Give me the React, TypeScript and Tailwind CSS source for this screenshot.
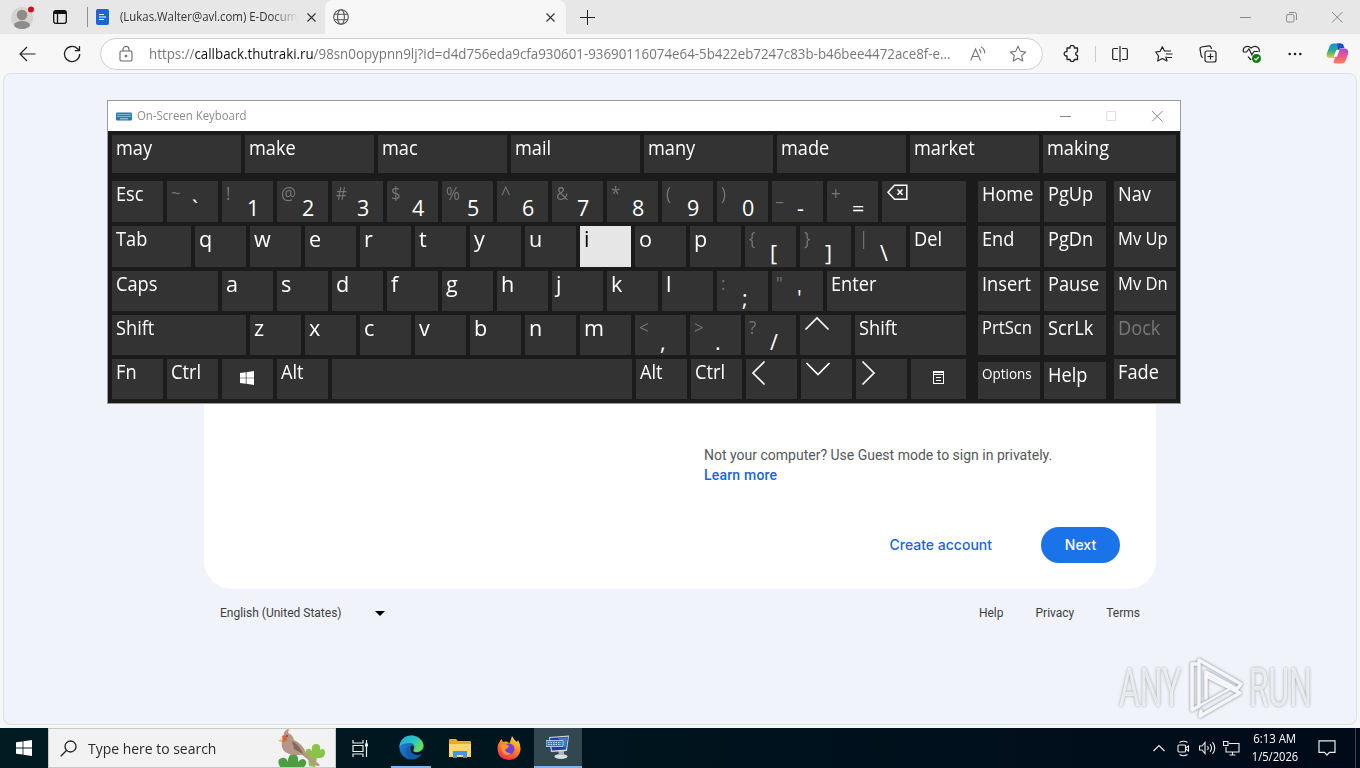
import React from "react";

type KeyDef = {
  label?: string;
  shift?: string;
  icon?: React.ReactNode;
  width?: string;
  size?: string;
  active?: boolean;
  dim?: boolean;
};

const WORD = "text-[20px] scale-x-[0.91] mt-[3px]";
const LETTER = "text-[22.5px] scale-x-[0.96] mt-[3px]";
const SMALL = "text-[18px] scale-x-[0.92] mt-[2px]";
const TINY = "text-[14.5px] scale-x-[0.93] mt-[2px]";

const letters = (chars: string): KeyDef[] =>
  chars.split("").map((c) => ({ label: c, size: LETTER }));

const pairs = (items: string[]): KeyDef[] =>
  items.map((p) => ({ shift: p[0], label: p[1] }));

const Chevron = ({ points, box }: { points: string; box: string }) => (
  <svg className={box} viewBox="0 0 26 26" fill="none" stroke="#fff" strokeWidth="1.7">
    <polyline points={points} />
  </svg>
);

const WindowsLogo = ({ className }: { className: string }) => (
  <svg className={className} viewBox="0 0 16 16" fill="#fff">
    <path d="M0 2.3 6.6 1.4v6.2H0zM7.4 1.3 16 0v7.6H7.4zM0 8.4h6.6v6.2L0 13.7zM7.4 8.4H16V16l-8.6-1.3z" />
  </svg>
);

const Backspace = (
  <svg className="ml-[5px] mt-[3px] h-[17px] w-[21px]" viewBox="0 0 21 17" fill="none" stroke="#fff" strokeWidth="1.5">
    <path d="M7.500 1.200h12.300v14H7.500L1 8.200z" />
    <path d="m10.500 5.500 5 5.200M15.500 5.500l-5 5.200" strokeWidth="1.600" />
  </svg>
);

const MenuIcon = (
  <svg className="ml-[22px] mt-[12px] h-[13px] w-[11px]" viewBox="0 0 11 13" fill="none" stroke="#fff" shapeRendering="crispEdges">
    <path d="M.5.5h10v12H.5zM0 1.500h11M0 3.500h11M3 6.500h5M3 9.500h5" />
  </svg>
);

const suggestions = ["may", "make", "mac", "mail", "many", "made", "market", "making"];

const rows: { height: string; keys: KeyDef[] }[] = [
  {
    height: "h-[41px]",
    keys: [
      { label: "Esc" },
      ...pairs(["~`", "!1", "@2", "#3", "$4", "%5", "^6", "&7", "*8", "(9", ")0", "_-", "+="]),
      { icon: Backspace, width: "w-[84px]" },
    ],
  },
  {
    height: "h-[41px]",
    keys: [
      { label: "Tab", width: "w-[79px]" },
      ...letters("qwertyu"),
      { label: "i", size: LETTER, active: true },
      ...letters("op"),
      ...pairs(["{[", "}]", "|\\"]),
      { label: "Del", width: "w-[56px]" },
    ],
  },
  {
    height: "h-[40px]",
    keys: [
      { label: "Caps", width: "w-[106px]" },
      ...letters("asdfghjkl"),
      ...pairs([":;", "\"'"]),
      { label: "Enter", width: "w-[139px]" },
    ],
  },
  {
    height: "h-[40px]",
    keys: [
      { label: "Shift", width: "w-[134px]" },
      ...letters("zxcvbnm"),
      ...pairs(["<,", ">.", "?/"]),
      { icon: <Chevron points="1.5,13.5 13,2 24.5,13.5" box="ml-[4px] mt-[1px] size-[26px]" /> },
      { label: "Shift", width: "w-[111px]" },
    ],
  },
  {
    height: "h-[40px]",
    keys: [
      { label: "Fn" },
      { label: "Ctrl" },
      { icon: <WindowsLogo className="ml-[18px] mt-[12px] size-[14px]" /> },
      { label: "Alt" },
      { width: "w-[300px]" },
      { label: "Alt" },
      { label: "Ctrl" },
      { icon: <Chevron points="13.5,1.5 2,13 13.5,24.5" box="ml-[5px] mt-[1px] size-[26px]" /> },
      { icon: <Chevron points="1.5,2 13,13.5 24.5,2" box="ml-[4px] mt-[2px] size-[26px]" /> },
      { icon: <Chevron points="1.5,1.5 13,13 1.5,24.5" box="ml-[5px] mt-[1px] size-[26px]" /> },
      { icon: MenuIcon, width: "w-[55px]" },
    ],
  },
];

const sideRows: { height: string; keys: KeyDef[] }[] = [
  { height: "h-[41px]", keys: [{ label: "Home" }, { label: "PgUp" }, { label: "Nav" }] },
  { height: "h-[41px]", keys: [{ label: "End" }, { label: "PgDn" }, { label: "Mv Up", size: SMALL }] },
  { height: "h-[40px]", keys: [{ label: "Insert" }, { label: "Pause" }, { label: "Mv Dn", size: SMALL }] },
  { height: "h-[40px]", keys: [{ label: "PrtScn", size: SMALL }, { label: "ScrLk" }, { label: "Dock", dim: true }] },
  { height: "h-[40px]", keys: [{ label: "Options", size: TINY }, { label: "Help" }, { label: "Fade" }] },
];

const Key = ({ def, extra = "" }: { def: KeyDef; extra?: string }) => (
  <div
    className={`flex shrink-0 items-start leading-[20px] ${def.width || "w-[51px]"} ${
      def.active ? "bg-[#e6e6e6] text-black" : def.dim ? "bg-[#333] text-[#787878]" : "bg-[#333] text-white"
    } ${extra}`}
  >
    {def.icon}
    {def.shift ? (
      <>
        <span className="w-[25px] shrink-0 pl-[4px] pt-[2px]">
          <span className="inline-block origin-left scale-x-[0.94] text-[18px] leading-[20px] text-[#757575]">{def.shift}</span>
        </span>
        <span className="pt-[17px] text-[21.5px]">{def.label}</span>
      </>
    ) : (
      def.label && (
        <span className={`ml-[4px] inline-block origin-left whitespace-nowrap ${def.size || WORD}`}>
          {def.label}
        </span>
      )
    )}
  </div>
);

const OnScreenKeyboard = () => (
  <div className="absolute left-[107px] top-[100px] flex h-[304px] w-[1074px] flex-col border border-[#9a9a9a] bg-[#1b1b1b]">
    <div className="flex h-[30px] shrink-0 items-center bg-white pl-[8px] text-[#8b8b8b]">
      <svg className="h-[9px] w-[16px]" viewBox="0 0 16 9">
        <rect y=".5" width="16" height="8" rx="1" fill="#2878be" />
        <path d="M1.500 2.500h13M1.500 4.500h13" stroke="#d8ecfa" strokeWidth="1" strokeDasharray="1 1" />
        <path d="M4 6.800h8" stroke="#d8ecfa" strokeWidth=".8" />
      </svg>
      <span className="ml-[5px] inline-block flex-1 origin-left scale-x-[0.95] text-[12px]">On-Screen Keyboard</span>
      <svg className="mr-[17px] h-[12px] w-[103px]" viewBox="0 0 103 12" fill="none" stroke="#8b8b8b">
        <path d="M0 6.500h11M92 1l10.500 10.500M102.500 1 92 11.500" />
        <path d="M46.500 1.500h9v9h-9z" stroke="#dedede" />
      </svg>
    </div>
    <div className="flex flex-col px-[4px] pt-[4px]">
      <div className="flex h-[38px] gap-1">
        {suggestions.map((word, index) => (
          <Key key={word} def={{ label: word, width: index === 7 ? "w-[133px]" : "w-[129px]" }} />
        ))}
      </div>
      <div className="mt-[8px] flex">
        <div className="flex w-[854px] flex-col gap-1">
          {rows.map((row, index) => (
            <div key={index} className={`flex gap-1 ${row.height}`}>
              {row.keys.map((def, i) => (
                <Key key={i} def={def} />
              ))}
            </div>
          ))}
        </div>
        <div className="ml-[12px] flex flex-col gap-1">
          {sideRows.map((row, index) => (
            <div key={index} className={`flex gap-1 ${row.height}`}>
              {row.keys.map((def, i) => (
                <Key
                  key={i}
                  def={{ ...def, width: "w-[62px]" }}
                  extra={i === 2 ? "ml-[4px]" : index === 4 ? "mt-[3px]" : ""}
                />
              ))}
            </div>
          ))}
        </div>
      </div>
    </div>
  </div>
);

const TabBar = () => (
  <div className="flex h-[34px] shrink-0 items-center bg-[#e7e7e7]">
    <svg className="ml-[10px] size-[25px]" viewBox="0 0 25 25">
      <circle cx="12" cy="13" r="11" fill="#d6d4d2" />
      <circle cx="12" cy="10" r="5.300" fill="#8f8b88" />
      <ellipse cx="12" cy="20" rx="8" ry="4" fill="#8f8b88" />
      <circle cx="21" cy="4.500" r="3" fill="#d4101e" />
    </svg>
    <svg className="ml-[18px] size-[14px]" viewBox="0 0 14 14" fill="none" stroke="#111" strokeWidth="1.300">
      <rect x=".7" y=".7" width="12.600" height="12.600" rx="2" />
      <path d="M1 2.500h12" strokeWidth="3" />
      <path d="M4.500 4v9" />
    </svg>
    <div className="ml-[20px] h-[20px] w-px bg-[#8f8f8f]" />
    <svg className="ml-[8px] h-[16px] w-[13px]" viewBox="0 0 13 16">
      <rect width="13" height="16" rx="2" fill="#1967d2" />
      <path d="M3 5.500h5M3 8h7M3 10.500h5" stroke="#fff" strokeWidth="1.200" />
    </svg>
    <div className="ml-[11px] w-[178px] whitespace-nowrap text-[12px] text-[#333] [mask-image:linear-gradient(to_right,black_85%,transparent)]">
      <span className="inline-block origin-left scale-x-[0.95]">(Lukas.Walter@avl.com) E-Docum</span>
    </div>
    <svg className="ml-[9px] size-[9px]" viewBox="0 0 9 9" stroke="#333" strokeWidth="1.100">
      <path d="m.5.5 8 8M8.500.5l-8 8" />
    </svg>
    <div className="ml-[9px] flex h-[34px] w-[241px] items-center rounded-t-[8px] bg-[#f7f7f7]">
      <svg className="ml-[8px] size-[16px]" viewBox="0 0 16 16" fill="none" stroke="#555" strokeWidth="1.100">
        <circle cx="8" cy="8" r="7.300" />
        <ellipse cx="8" cy="8" rx="3.400" ry="7.300" />
        <path d="M1.500 5.300h13M1.500 10.700h13" />
      </svg>
      <svg className="ml-[197px] size-[9px]" viewBox="0 0 9 9" stroke="#333" strokeWidth="1.100">
        <path d="m.5.5 8 8M8.500.5l-8 8" />
      </svg>
    </div>
    <svg className="ml-[14px] size-[15px]" viewBox="0 0 15 15" stroke="#222">
      <path d="M7.500 0v15M0 7.500h15" />
    </svg>
    <svg className="ml-auto mr-[17px] h-[12px] w-[103px]" viewBox="0 0 103 12" fill="none" stroke="#888">
      <path d="M0 6.500h11M92 1l10.500 10.500M102.500 1 92 11.500" />
      <rect x="46.500" y="3.500" width="7.500" height="7.500" rx="1.500" />
      <path d="M49 1.500h5.500a2 2 0 0 1 2 2V9" />
    </svg>
  </div>
);

const Toolbar = () => (
  <div className="flex h-[39px] shrink-0 items-center bg-[#f7f7f7]">
    <svg className="ml-[19px] h-[16px] w-[17px]" viewBox="0 0 17 16" fill="none" stroke="#222" strokeWidth="1.200">
      <path d="M16.500 8H1M8 1 1 8l7 7" />
    </svg>
    <svg className="ml-[27px] size-[18px]" viewBox="0 0 18 18" fill="none" stroke="#222" strokeWidth="1.300">
      <path d="M16.700 9A7.600 7.600 0 1 1 14.500 3.700L16.300 5.500M16.500 1v4.700h-4.700" />
    </svg>
    <div className="ml-[19px] flex h-[32px] w-[943px] items-center rounded-full border border-[#cfcfcf] bg-white">
      <svg className="ml-[17px] size-[16px]" viewBox="0 0 16 16" fill="none" stroke="#666" strokeWidth="1.100">
        <rect x="2" y="5" width="12" height="10" rx="1.500" />
        <path d="M5 5V3.500a3 3 0 0 1 6 0V5" />
        <circle cx="8" cy="10" r=".8" fill="#555" />
      </svg>
      <div className="ml-[15px] w-[821px] whitespace-nowrap text-[14px] text-[#767676]">
        <span className="inline-block origin-left scale-x-[0.952]">
          https://<span className="text-[#111]">callback.thutraki.ru</span>
          /98sn0opypnn9lj?id=d4d756eda9cfa930601-93690116074e64-5b422eb7247c83b-b46bee4472ace8f-e...
        </span>
      </div>
      <svg className="size-[16px]" viewBox="0 0 16 16" fill="none" stroke="#777" strokeWidth="1.100">
        <path d="M.7 14.500 5.500 3l5 11.500M2.400 10.500h6.400M9 3.200q2 1.200 2 4M11 1q4 2 3.700 6.500" />
      </svg>
      <svg className="ml-[23px] size-[18px]" viewBox="0 0 24 24" fill="none" stroke="#777" strokeWidth="1.500">
        <path d="m12 1.800 3.100 6.700 7.200.8-5.400 4.900 1.500 7.200-6.400-3.600-6.400 3.600 1.500-7.200L1.700 9.300l7.200-.8z" strokeLinejoin="round" />
      </svg>
    </div>
    <svg className="ml-[20px] size-[17px]" viewBox="0 0 17 17" fill="none" stroke="#222" strokeWidth="1.300">
      <path d="M4 3h3a2.200 2.200 0 1 1 4.300 0H14.500v3.800a1.800 1.800 0 1 0 0 3.700v4h-3.200a2.100 2.100 0 0 1-4.200 0H4v-3.600a2.200 2.200 0 1 1 0-4.200z" strokeLinejoin="round" />
    </svg>
    <div className="ml-[15px] h-[16px] w-px bg-[#ccc]" />
    <svg className="ml-[16px] size-[16px]" viewBox="0 0 16 16" fill="none" stroke="#222" strokeWidth="1.200">
      <path d="M6 2.500H2a1.300 1.300 0 0 0-1.300 1.300v8.400A1.300 1.300 0 0 0 2 13.500h4M10 2.500h4a1.300 1.300 0 0 1 1.300 1.300v8.400a1.300 1.300 0 0 1-1.300 1.300h-4M8 0v16" />
    </svg>
    <svg className="ml-[27px] h-[17px] w-[18px]" viewBox="0 0 18 17" fill="none" stroke="#222" strokeWidth="1.200">
      <path d="M10.800 11.500 12 16l-4.700-2.500L2.700 16l.9-5L.7 7l4.500-.7L7.300 1.700 9.500 6H16M11 9h6.500M12 12.500h5" strokeLinejoin="round" />
    </svg>
    <svg className="ml-[26px] size-[18px]" viewBox="0 0 18 18" fill="none" stroke="#222" strokeWidth="1.200">
      <rect x="6" y="6" width="11" height="11" rx="2" />
      <path d="M11.500 8.500v6M8.500 11.500h6M3.800 12.600a2 2 0 0 1-1.600-1.800L1 4.200A2 2 0 0 1 2.600 2L9.800.8A2 2 0 0 1 12 2.300l.5 1.700" />
    </svg>
    <svg className="ml-[25px] size-[20px]" viewBox="0 0 20 20" fill="none" stroke="#222" strokeWidth="1.200">
      <path d="M9.200 16 6 12.700M1.500 8C0 3.500 5 .5 9.200 4 13.400.5 18.500 3.500 17 8" />
      <path d="M1 8h3.500L7 4.800l2.800 6L12 7.500h4" />
      <circle cx="14.500" cy="14.500" r="4.500" fill="#107c10" stroke="none" />
      <path d="m12.500 14.500 1.500 1.500 2.700-3" stroke="#fff" />
    </svg>
    <svg className="ml-[26px] h-[4px] w-[14px]" viewBox="0 0 14 4" fill="#222">
      <circle cx="1.700" cy="2" r="1.300" />
      <circle cx="7" cy="2" r="1.300" />
      <circle cx="12.300" cy="2" r="1.300" />
    </svg>
    <svg className="ml-[24px] size-[23px]" viewBox="0 0 23 23">
      <defs>
        <linearGradient id="cpA" x1="0" y1="0" x2="0" y2="1">
          <stop offset="0" stopColor="#1a8ce8" />
          <stop offset=".5" stopColor="#2cae8d" />
          <stop offset="1" stopColor="#f5c52c" />
        </linearGradient>
        <linearGradient id="cpB" x1="0" y1="0" x2="0" y2="1">
          <stop offset="0" stopColor="#a54fdd" />
          <stop offset=".5" stopColor="#ef5590" />
          <stop offset="1" stopColor="#fb8355" />
        </linearGradient>
      </defs>
      <path d="M7 1.500h7q2 0 1.300 2L11.500 14q-.8 2-3 2H4Q0 16 .8 11.500L3.700 4Q4.700 1.500 7 1.500z" fill="url(#cpA)" />
      <path d="M11 1.500h4.500q1.500 0 2 1.700l1 3h-4q-1.500 0-2.200 2z" fill="#164fc4" />
      <path d="M16 21.500H9q-2 0-1.300-2L11.500 9q.8-2.500 3-2.500H19q4 .5 3.200 5L19.500 19q-1 2.500-3.500 2.500z" fill="url(#cpB)" />
      <path d="M10.300 8h3.200L11 14.800H7.800z" fill="#fff" />
    </svg>
  </div>
);

const Page = () => (
  <div className="flex-1 bg-[#f5f6f6] px-[3px] pb-[3px]">
    <div className="flex h-[652px] flex-col items-center rounded-[8px] border border-[#dfe2e4] bg-[#f0f3fa] font-['Roboto',sans-serif]">
      <div className="mt-[131px] flex h-[384px] w-[952px] flex-col rounded-[28px] bg-white pl-[500px] pr-[36px] pt-[240px] text-[14px] leading-[20px]">
        <p className="text-[#54575a]">Not your computer? Use Guest mode to sign in privately.</p>
        <a className="font-medium tracking-[0.2px] text-[#1967d2]">Learn more</a>
        <div className="mt-[42px] flex items-center justify-end gap-[49px] font-['Inter',sans-serif] font-medium">
          <a className="text-[#1967d2]">Create account</a>
          <button className="h-[36px] w-[79px] rounded-full bg-[#1a73e8] text-white">Next</button>
        </div>
      </div>
      <div className="flex w-[920px] items-center pt-[16px] text-[12px] leading-[16px] text-[#3c4043]">
        <span>English (United States)</span>
        <span className="ml-[33px] border-x-[5px] border-t-[5px] border-x-transparent border-t-black" />
        <span className="ml-auto">Help</span>
        <span className="ml-[32px]">Privacy</span>
        <span className="ml-[32px]">Terms</span>
      </div>
    </div>
  </div>
);

const Watermark = () => (
  <div className="absolute left-[1119px] top-[656px] flex h-[64px] w-[200px] items-center font-['Roboto',sans-serif] text-[53px] leading-none text-white/70 drop-shadow-[0_0_1.5px_rgba(80,85,95,0.7)]">
    <div className="w-[66px] shrink-0">
      <span className="inline-block origin-left scale-x-[0.6]">ANY</span>
    </div>
    <svg className="h-[64px] w-[60px] shrink-0" viewBox="0 0 60 64" fill="none" stroke="#f6f7fa" strokeWidth="3.500" strokeLinejoin="round" strokeLinecap="round">
      <path d="M13 8H7v46l7-4V4l42 24-4 5-31-17v26" />
      <path d="m21 20 34 17-40 23 1-5" />
      <path d="m14 50 34-19" strokeWidth="2.500" />
    </svg>
    <div className="ml-[4px] w-[66px] shrink-0">
      <span className="inline-block origin-left scale-x-[0.6]">RUN</span>
    </div>
  </div>
);

const Bird = () => (
  <svg className="ml-auto mr-[9px] h-[38px] w-[50px] self-end" viewBox="0 0 50 38">
    <path d="M32 27q-3-2-2-6 3-3 6 1-1-7 4-7t4 6q5-3 5 3 0 6-8 5l-2 9-6-1z" fill="#8ac24a" />
    <path d="M4 38q-4-8 2-9 4-1 6 4 0-8 5-8 6 0 5 8 4-5 7-2 3 3-1 7z" fill="#4f9d43" />
    <path d="M8 4q2-4 5-4l-1 4q5 2 6 7 9 4 12 13l14 12q-2 2-5 0l-13-10Q8 27 6 18q-1-5 1-9z" fill="#b69785" />
    <path d="M16 12q8 4 11 13l-9-5z" fill="#85695c" />
    <path d="M6 7q4-2 5 2 0 4-4 4z" fill="#d9653c" />
    <path d="M5 10 2 12l4 1z" fill="#e9b33e" />
    <circle cx="11" cy="7" r=".8" fill="#222" />
  </svg>
);

const Taskbar = () => (
  <div className="flex h-[40px] shrink-0 items-center bg-linear-to-r from-[#001b22] via-[#00141e] to-[#000a18] text-white">
    <WindowsLogo className="ml-[16px] size-[16px]" />
    <div className="ml-[16px] flex h-[40px] w-[288px] items-center border border-[#c8c8c8] bg-[#f2f2f2] text-[#2b2b2b]">
      <svg className="ml-[11px] size-[17px]" viewBox="0 0 17 17" fill="none" stroke="#222" strokeWidth="1.300">
        <circle cx="10.500" cy="6.500" r="5.500" />
        <path d="M6.500 10.500.7 16.300" />
      </svg>
      <div className="ml-[11px] w-[140px] whitespace-nowrap text-[15px]">
        <span className="inline-block origin-left scale-x-[0.93]">Type here to search</span>
      </div>
      <Bird />
    </div>
    <svg className="ml-[16px] h-[17px] w-[17px]" viewBox="0 0 17 17" fill="none" stroke="#e8eef0" strokeWidth="1.200">
      <path d="M1 0v3h10V0M1 17v-3h10v3M1 5.500h10v6H1zM14.500 0v17" />
      <path d="M13 3.500h3v3h-3z" fill="#e8eef0" stroke="none" />
    </svg>
    <div className="ml-[22px] flex h-[40px] w-[40px] items-center justify-center border-b-2 border-[#76b9ed]">
      <svg className="size-[25px]" viewBox="0 0 25 25">
        <defs>
          <linearGradient id="edgeA" x1="0" y1="0" x2="1" y2=".5">
            <stop offset="0" stopColor="#28a9e2" />
            <stop offset=".6" stopColor="#2bc3c1" />
            <stop offset="1" stopColor="#6adf53" />
          </linearGradient>
          <linearGradient id="edgeB" x1="0" y1="0" x2="1" y2="1">
            <stop offset="0" stopColor="#2387dc" />
            <stop offset="1" stopColor="#0b4d9a" />
          </linearGradient>
        </defs>
        <circle cx="12.500" cy="12.500" r="12" fill="url(#edgeB)" />
        <path d="M.5 13C0 5 6 .5 12.500.5S25 6 24.500 11c-.5 4-4 6-7.500 6-2 0-3.500-1-2.500-2.500 2.500-3.500 0-6.500-3.500-6.500C6 8 1.500 9 .5 13z" fill="url(#edgeA)" />
        <path d="M11 10q-3 7 4 9.500 4 1 7.500-1-4 6-9 5.500Q7 22 7.500 16 8 12 11 10z" fill="#135ca8" />
        <path d="M12 10.500q4 0 2.500 4-1.500 3 3 3 4-.2 6.500-3l1 2-2.500 2.500q-4 2-8 0Q11 17 11.500 13z" fill="#001820" />
      </svg>
    </div>
    <svg className="ml-[18px] h-[19px] w-[22px]" viewBox="0 0 22 19">
      <path d="M0 1q0-1 1-1h6l2 2h12q1 0 1 1v15H0z" fill="#f0a927" />
      <path d="M0 5h22v13H0z" fill="#ffd86d" />
      <path d="M4 19v-7h14v7h-4v-3H8v3z" fill="#3c9be0" />
    </svg>
    <svg className="ml-[26px] h-[24px] w-[24px]" viewBox="0 0 24 24">
      <defs>
        <linearGradient id="fx" x1=".8" y1="0" x2=".3" y2="1">
          <stop offset="0" stopColor="#ffe14a" />
          <stop offset=".45" stopColor="#ff8a1f" />
          <stop offset="1" stopColor="#f02a5c" />
        </linearGradient>
      </defs>
      <path d="M15 0q2 4 5 6l1-2q3 5 2.500 10Q22 23.500 12 24 1 23.500.5 13 .5 8 3 5l1.500-2L6 6l2-.5Q12 5 12 8q2-4 3-8z" fill="url(#fx)" />
      <circle cx="12" cy="13" r="5.500" fill="#7441d8" />
      <path d="M4 9q5-2 8 1-1 3-4 3.500 1 4 6 3.500-4 4-8 0Q4 14 4 9z" fill="#ff9726" />
    </svg>
    <div className="ml-[13px] flex h-[40px] w-[48px] items-center justify-center border-b-2 border-[#76b9ed] bg-[#324750]">
      <svg className="h-[25px] w-[25px]" viewBox="0 0 25 25">
        <ellipse cx="15" cy="21.500" rx="6.500" ry="2.500" fill="#d8dee2" />
        <path d="m12 15 6-1v6h-5z" fill="#aab5bd" />
        <path d="M3 2 23 .5 21 16 5 17z" fill="#cfd7e0" />
        <path d="M4 3 22 1.800 20 14.500 6 15.500z" fill="#1c3fae" />
        <path d="m12 3 9.500-.8-2 11.500z" fill="#4773d2" />
        <path d="M0 5.500h17v6H0z" fill="#2f7fd0" stroke="#dcecf8" strokeWidth=".7" />
        <path d="M2 7.500h13M2 9.500h13" stroke="#bcdcf5" strokeDasharray="1.500 1" />
      </svg>
    </div>
    <svg className="ml-auto h-[8px] w-[12px]" viewBox="0 0 12 8" fill="none" stroke="#eee" strokeWidth="1.200">
      <path d="m.5 7 5.500-5.500L11.500 7" />
    </svg>
    <svg className="ml-[12px] h-[17px] w-[13px]" viewBox="0 0 13 17" fill="none" stroke="#eee" strokeWidth="1.100">
      <rect x="1" y="5" width="7.500" height="7" rx="1" />
      <path d="m8.500 8 3-2v5l-3-2M2.500 2.500q4-2.500 8 0M2.500 14.500q4 2.500 8 0" />
    </svg>
    <svg className="ml-[9px] h-[14px] w-[18px]" viewBox="0 0 18 14" fill="none" stroke="#eee" strokeWidth="1.100">
      <path d="M.5 5h2.500l3-3.500v11L3 9H.500zM8.500 5q1.500 2 0 4M11 3q3 4 0 8M13.500 1.200q4.500 5.800 0 11.600" />
    </svg>
    <svg className="ml-[6px] h-[15px] w-[17px]" viewBox="0 0 17 15" fill="none" stroke="#eee" strokeWidth="1.100">
      <path d="M6 2.500h10v8.500H3V6M6.500 14h6M9.500 11v3M.5.500h4.500v4H.500z" />
    </svg>
    <div className="ml-[10px] flex w-[50px] flex-col items-center whitespace-nowrap text-[12px] leading-[18px]">
      <span className="scale-x-[0.95]">6:13 AM</span>
      <span className="scale-x-[0.93]">1/5/2026</span>
    </div>
    <svg className="ml-[18px] h-[16px] w-[18px]" viewBox="0 0 18 16" fill="none" stroke="#eee" strokeWidth="1.200">
      <path d="M1 .8h16v11.500h-5.500L9 15l-2.500-2.700H1z" />
    </svg>
    <div className="ml-[19px] mr-[4px] h-[40px] w-px bg-[#3b424c]" />
  </div>
);

const App = () => (
  <div className="relative flex h-[768px] w-[1360px] flex-col overflow-hidden font-['Open_Sans',sans-serif]">
    <TabBar />
    <Toolbar />
    <Page />
    <Taskbar />
    <Watermark />
    <OnScreenKeyboard />
  </div>
);

export default App;
